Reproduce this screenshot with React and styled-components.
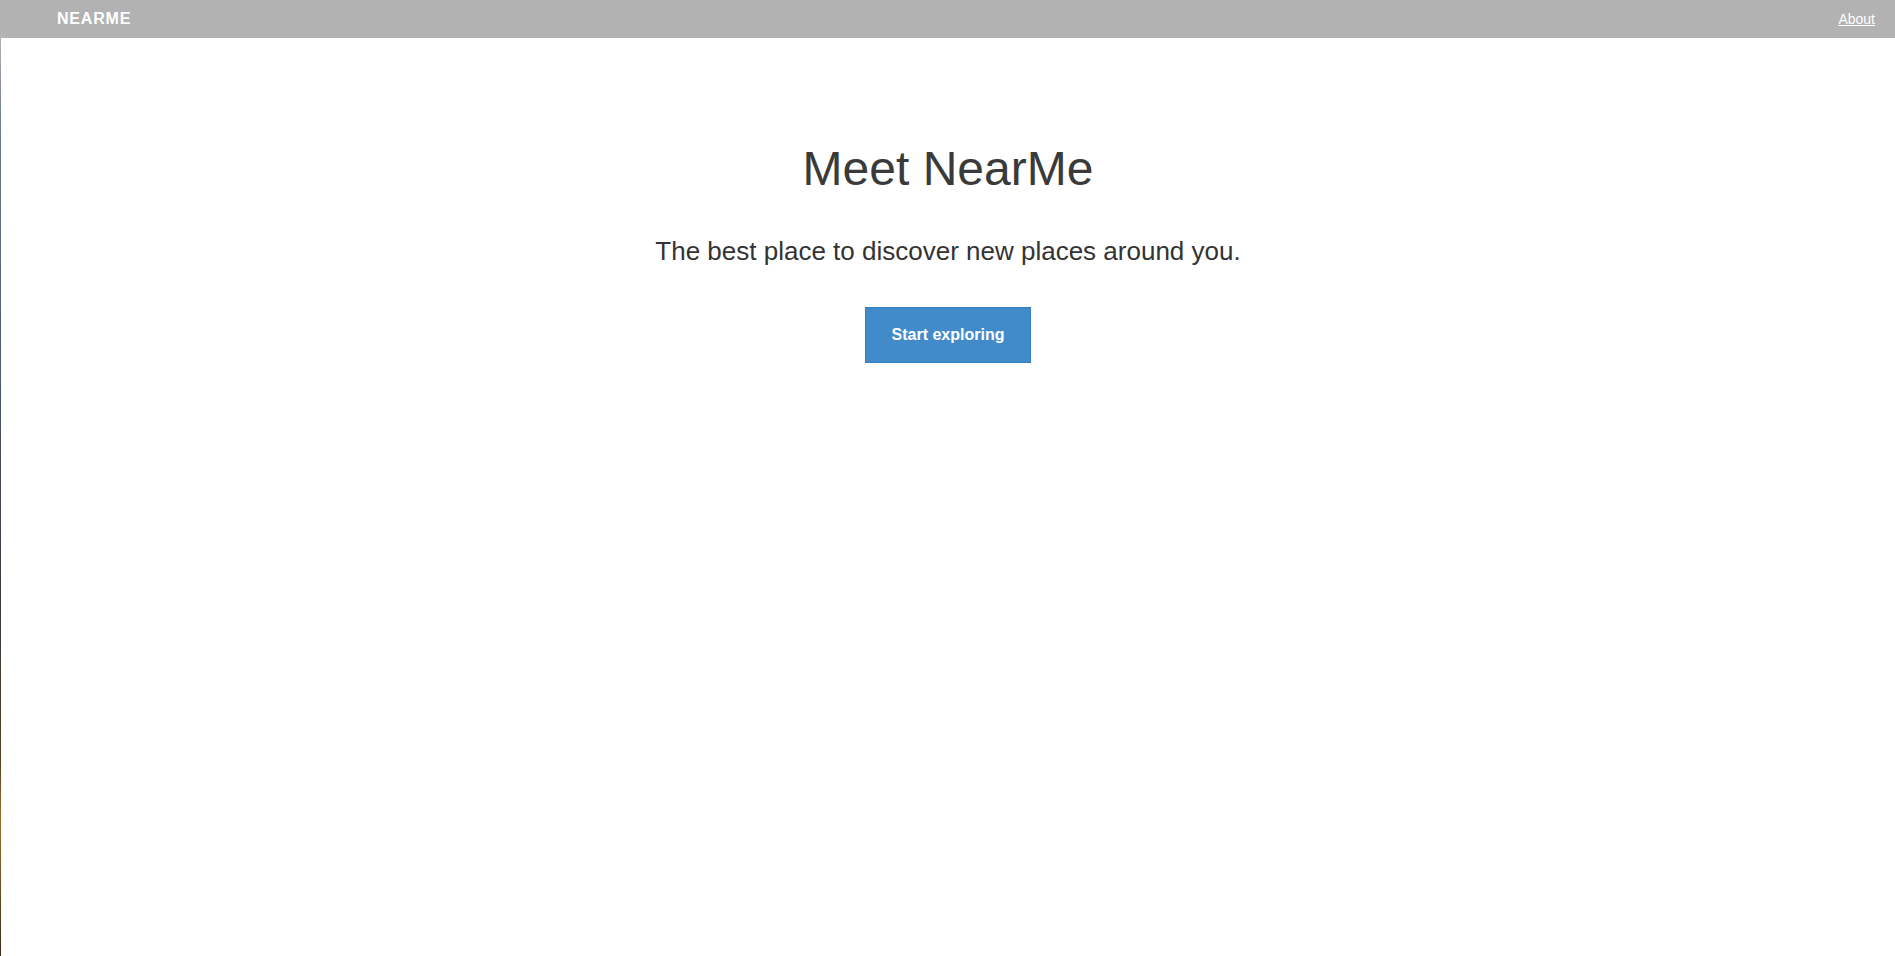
import React from "react";
import styled, { createGlobalStyle } from "styled-components";

const GlobalStyle = createGlobalStyle`
  html, body {
    margin: 0;
    padding: 0;
    background: #fff;
  }
  body {
    font-family: "Liberation Sans", Arial, Helvetica, sans-serif;
    color: #333;
  }
`;

const Page = styled.div`
  min-height: 956px;
  border-left: 1px solid transparent;
  border-image: linear-gradient(
      to bottom,
      #b2b2b2 0,
      #b2b2b2 38px,
      #6f7c93 120px,
      #4a5470 400px,
      #3a3a40 600px,
      #5a4020 760px,
      #a0702a 820px,
      #3a2a18 956px
    )
    1;
`;

const NavBar = styled.header`
  height: 38px;
  background: #b2b2b2;
  display: flex;
  align-items: center;
  justify-content: space-between;
  padding: 0 20px 0 56px;
`;

const Brand = styled.a`
  color: #fff;
  font-size: 16px;
  font-weight: bold;
  letter-spacing: 0.8px;
  text-decoration: none;
`;

const NavLink = styled.a`
  color: #fff;
  font-size: 14px;
  text-decoration: underline;
`;

const Hero = styled.main`
  display: flex;
  flex-direction: column;
  align-items: center;
  padding-top: 103px;
`;

const Title = styled.h1`
  margin: 0;
  font-size: 48px;
  font-weight: 300;
  line-height: 56px;
  color: #3a3a3a;
`;

const Tagline = styled.p`
  margin: 38px 0 0;
  font-size: 26px;
  line-height: 32px;
  color: #333;
`;

const Button = styled.a`
  margin-top: 40px;
  display: inline-block;
  padding: 17px 26px;
  line-height: 20px;
  font-size: 16px;
  font-weight: bold;
  color: #fff;
  background: #428bca;
  border: 1px solid #357ebd;
  text-decoration: none;
  cursor: pointer;
`;

export default function App() {
  return (
    <Page>
      <GlobalStyle />
      <NavBar>
        <Brand href="#">NEARME</Brand>
        <NavLink href="#">About</NavLink>
      </NavBar>
      <Hero>
        <Title>Meet NearMe</Title>
        <Tagline>The best place to discover new places around you.</Tagline>
        <Button>Start exploring</Button>
      </Hero>
    </Page>
  );
}
